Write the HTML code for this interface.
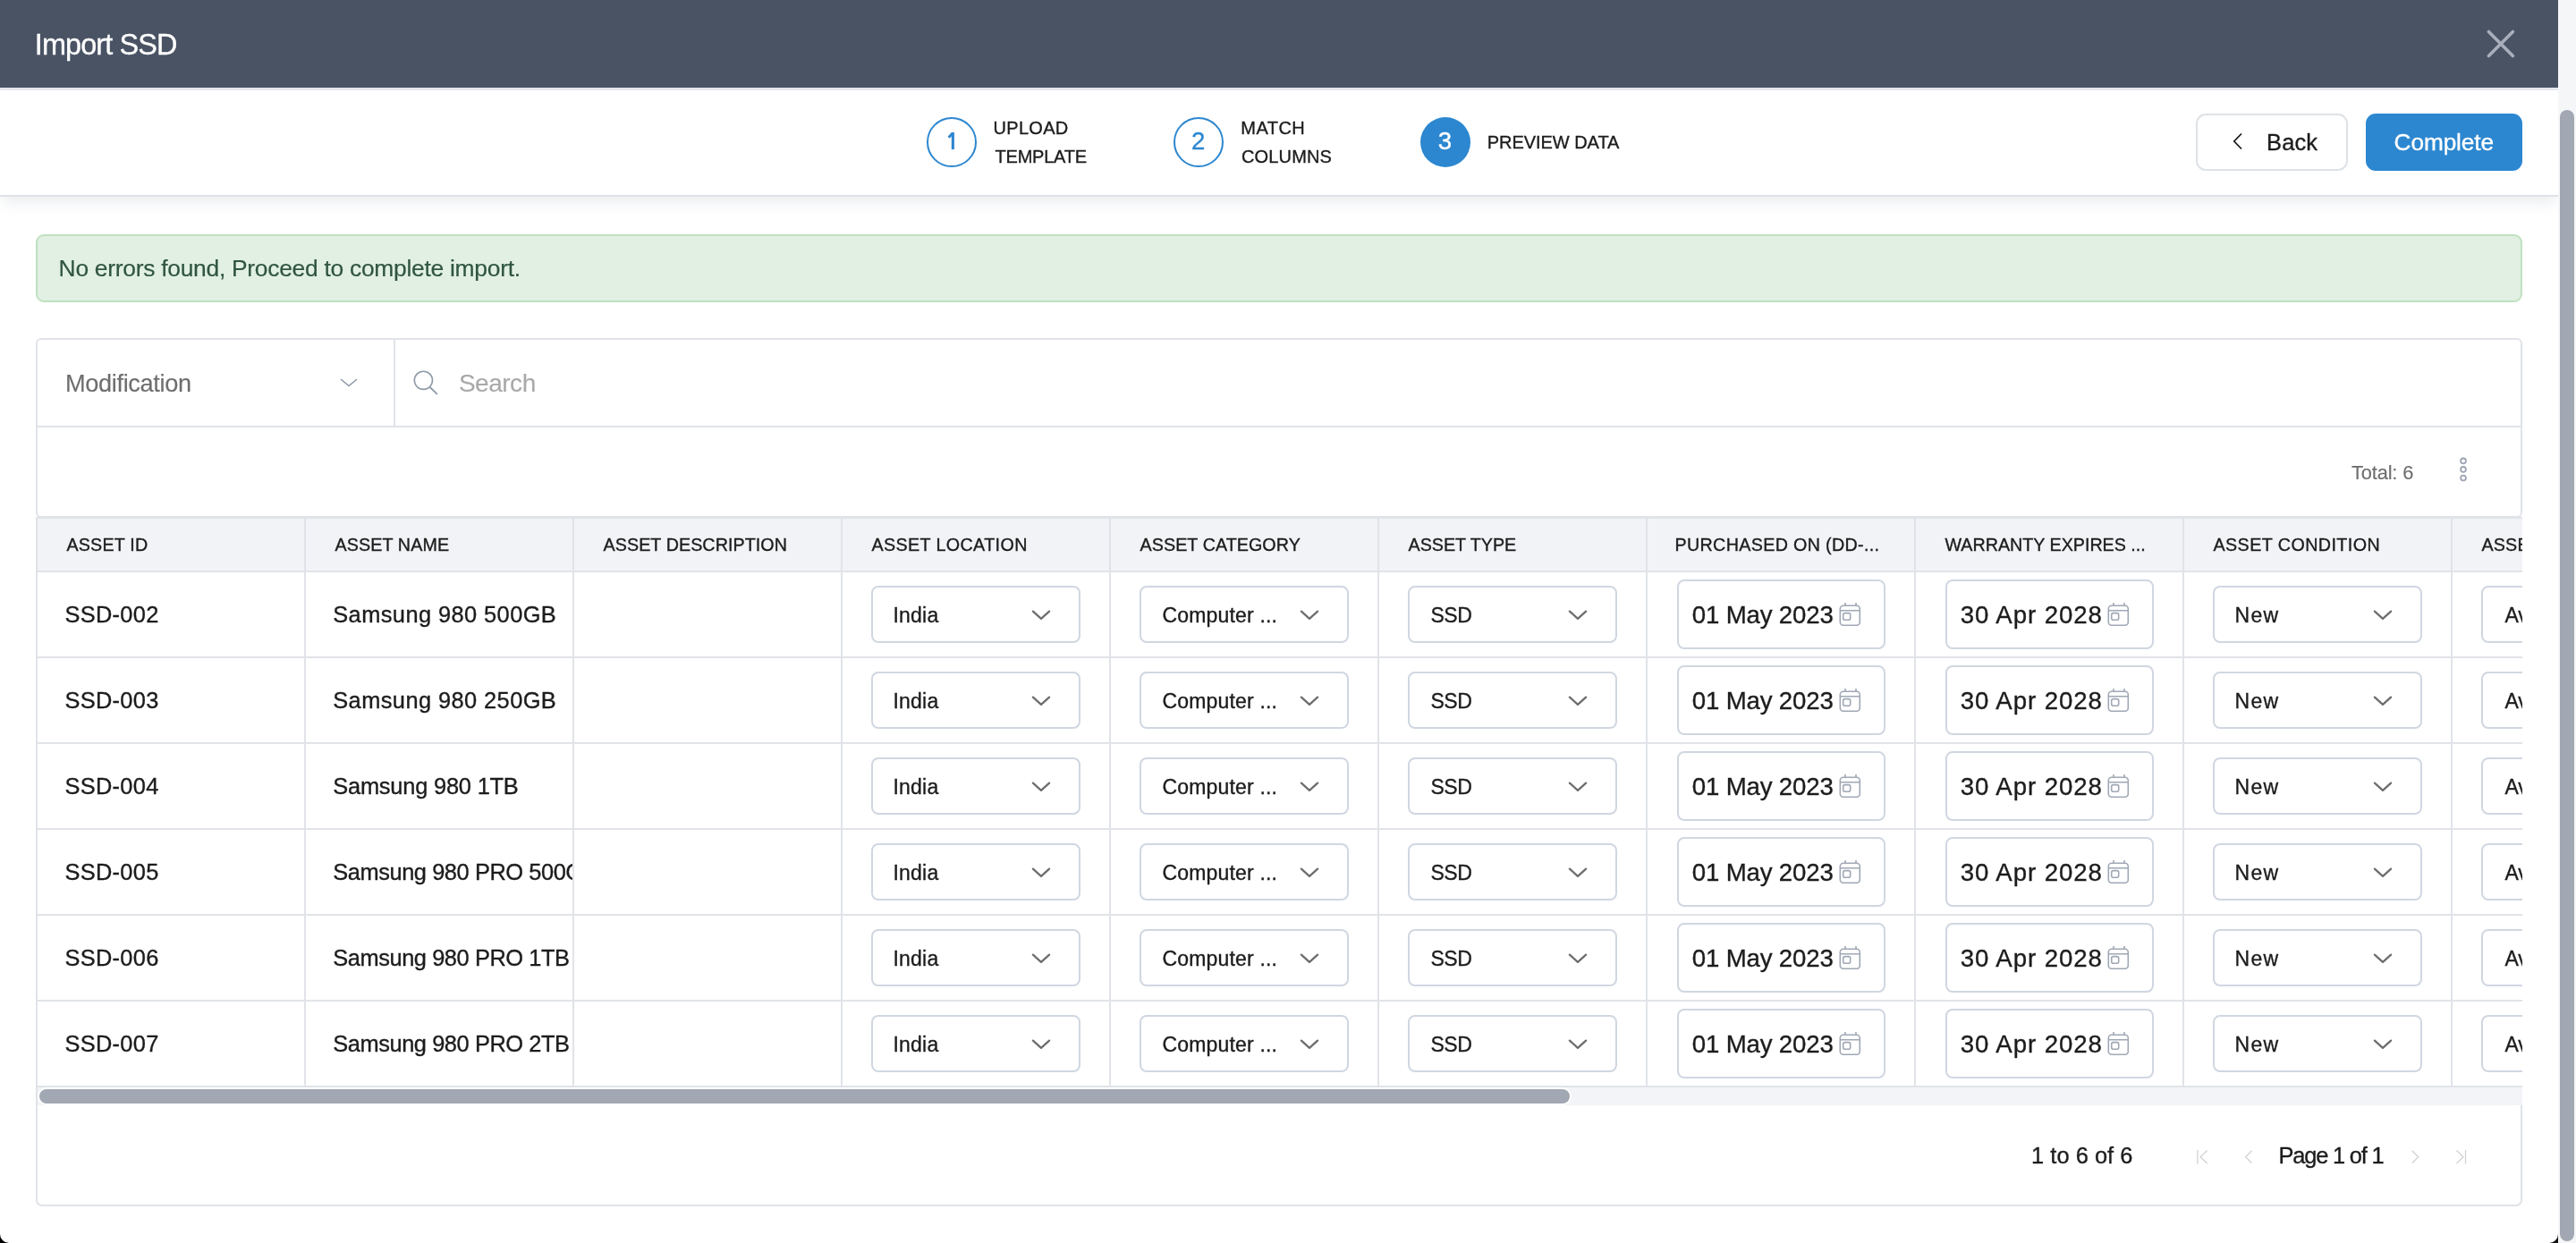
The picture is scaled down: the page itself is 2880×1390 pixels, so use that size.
<!DOCTYPE html>
<html><head><meta charset="utf-8"><title>Import SSD</title>
<style>
html,body{margin:0;padding:0;}
body{width:2880px;height:1390px;overflow:hidden;position:relative;background:#ffffff;font-family:"Liberation Sans",sans-serif;}
.t{position:absolute;line-height:1;white-space:nowrap;-webkit-text-stroke:0.35px currentColor;}
@media (max-width:2000px){body{width:1440px;height:695px;}#wrap{transform:scale(0.5);transform-origin:0 0;}}
</style></head><body>
<div id="wrap" style="position:absolute;left:0;top:0;width:2880px;height:1390px;will-change:transform;background:#fff;">
<div style="position:absolute;left:0px;top:0px;width:2860px;height:98px;background:#495364;"></div>
<div style="position:absolute;left:0px;top:98px;width:2860px;height:2.5px;background:#e6e8ec;"></div>
<div class="t" style="left:38.80px;top:34.00px;font-size:32.4px;color:#ffffff;letter-spacing:-0.867px;">Import SSD</div>
<svg style="position:absolute;left:2776px;top:29px" width="40" height="40" viewBox="0 0 40 40"><path d="M6.4 6.4 L33.4 33.4 M33.4 6.4 L6.4 33.4" stroke="#a9b0bb" stroke-width="3.6" stroke-linecap="round" fill="none"/></svg>
<div style="position:absolute;left:0px;top:100.5px;width:2860px;height:118px;background:#fff;box-shadow:0 9px 15px -2px rgba(50,70,100,0.10);"></div>
<div style="position:absolute;left:0px;top:218px;width:2860px;height:2px;background:#dee2e6;"></div>
<div style="position:absolute;left:1036px;top:130.8px;width:56px;height:56px;box-sizing:border-box;border:2px solid #2c87d0;border-radius:50%;"></div>
<svg style="position:absolute;left:1056px;top:145px" width="14" height="25" viewBox="0 0 14 25"><path d="M7.8 3.1 L10.9 3.1 L10.9 21.9 L7.8 21.9 L7.8 7.4 L5.4 9.7 L3.6 7.7 Z" fill="#2c87d0"/></svg>
<div style="position:absolute;left:1312px;top:130.8px;width:56px;height:56px;box-sizing:border-box;border:2px solid #2c87d0;border-radius:50%;"></div>
<div class="t" style="left:1332.00px;top:144.00px;font-size:27.6px;color:#2c87d0;letter-spacing:0.400px;">2</div>
<div style="position:absolute;left:1588px;top:130.8px;width:56px;height:56px;background:#2c87d0;border-radius:50%;"></div>
<div class="t" style="left:1607.75px;top:144.00px;font-size:27.6px;color:#ffffff;letter-spacing:1.000px;">3</div>
<div class="t" style="left:1110.50px;top:133.00px;font-size:20px;color:#1c1c1c;letter-spacing:0.300px;">UPLOAD</div>
<div class="t" style="left:1112.50px;top:165.00px;font-size:20px;color:#1c1c1c;letter-spacing:-0.214px;">TEMPLATE</div>
<div class="t" style="left:1387.30px;top:133.00px;font-size:20px;color:#1c1c1c;letter-spacing:0.475px;">MATCH</div>
<div class="t" style="left:1387.90px;top:165.00px;font-size:20px;color:#1c1c1c;letter-spacing:0.167px;">COLUMNS</div>
<div class="t" style="left:1662.75px;top:149.00px;font-size:20px;color:#1c1c1c;letter-spacing:-0.045px;">PREVIEW DATA</div>
<div style="position:absolute;left:2455px;top:127px;width:170px;height:64px;box-sizing:border-box;border:2px solid #dfe2e6;border-radius:11px;background:#fff;"></div>
<svg style="position:absolute;left:2492px;top:144px" width="20" height="28" viewBox="0 0 20 28"><path d="M14 5.5 L5.8 14 L14 22.5" stroke="#1c1c1c" stroke-width="1.8" fill="none"/></svg>
<div class="t" style="left:2534.00px;top:147.00px;font-size:25.4px;color:#1c1c1c;letter-spacing:0.200px;">Back</div>
<div style="position:absolute;left:2645px;top:127px;width:175px;height:64px;background:#2c87d0;border-radius:11px;"></div>
<div class="t" style="left:2676.60px;top:146.00px;font-size:26.2px;color:#ffffff;letter-spacing:-0.086px;">Complete</div>
<div style="position:absolute;left:40px;top:262px;width:2780px;height:76px;box-sizing:border-box;border:2px solid #bfe1c0;border-radius:9px;background:#e1f0e2;"></div>
<div class="t" style="left:65.60px;top:287.00px;font-size:26.4px;color:#30553f;letter-spacing:-0.270px;-webkit-text-stroke:0.2px currentColor;">No errors found, Proceed to complete import.</div>
<div style="position:absolute;left:40px;top:378px;width:2780px;height:201px;box-sizing:border-box;border:2px solid #e0e3e8;border-radius:6px;background:#fff;"></div>
<div style="position:absolute;left:40px;top:476px;width:2780px;height:1.5px;background:#e0e3e8;"></div>
<div style="position:absolute;left:440px;top:378px;width:1.5px;height:99px;background:#e0e3e8;"></div>
<div class="t" style="left:73.00px;top:415.00px;font-size:27.2px;color:#6e6e6e;letter-spacing:-0.364px;-webkit-text-stroke:0.15px currentColor;">Modification</div>
<svg style="position:absolute;left:376px;top:418px" width="28" height="20" viewBox="0 0 28 20"><path d="M5 6 L14 13.5 L23 6" stroke="#909aa8" stroke-width="1.6" fill="none"/></svg>
<svg style="position:absolute;left:458px;top:410px" width="36" height="36" viewBox="0 0 36 36"><circle cx="15.4" cy="15.3" r="10.1" stroke="#909aa8" stroke-width="1.6" fill="none"/><path d="M22.7 23 L30.9 30.8" stroke="#909aa8" stroke-width="1.8" fill="none"/></svg>
<div class="t" style="left:512.90px;top:415.00px;font-size:28px;color:#a9a9a9;letter-spacing:-0.480px;-webkit-text-stroke:0.15px currentColor;">Search</div>
<div class="t" style="left:2629.00px;top:518.00px;font-size:21.8px;color:#6e6e6e;letter-spacing:-0.143px;-webkit-text-stroke:0.15px currentColor;">Total: 6</div>
<svg style="position:absolute;left:2744px;top:505px" width="20" height="40" viewBox="0 0 20 40"><g stroke="#9ba4b2" stroke-width="1.8" fill="none"><circle cx="10" cy="10.4" r="2.9"/><circle cx="10" cy="19.9" r="2.9"/><circle cx="10" cy="29.5" r="2.9"/></g></svg>
<div style="position:absolute;left:40px;top:578px;width:2780px;height:658px;overflow:hidden;">
<div style="position:absolute;left:0px;top:0px;width:3000px;height:62px;background:#f2f3f6;"></div>
<div style="position:absolute;left:0px;top:0px;width:3000px;height:2px;background:#e0e3e8;"></div>
<div style="position:absolute;left:0px;top:60px;width:3000px;height:2px;background:#e0e3e8;"></div>
<div style="position:absolute;left:0px;top:0px;width:2px;height:638px;background:#e0e3e8;"></div>
<div class="t" style="left:34.50px;top:22.00px;font-size:19.7px;color:#1c1c1c;letter-spacing:0.179px;">ASSET ID</div>
<div class="t" style="left:334.50px;top:22.00px;font-size:19.7px;color:#1c1c1c;letter-spacing:0.111px;">ASSET NAME</div>
<div class="t" style="left:634.50px;top:22.00px;font-size:19.7px;color:#1c1c1c;letter-spacing:0.078px;">ASSET DESCRIPTION</div>
<div class="t" style="left:934.50px;top:22.00px;font-size:19.7px;color:#1c1c1c;letter-spacing:0.385px;">ASSET LOCATION</div>
<div class="t" style="left:1234.50px;top:22.00px;font-size:19.7px;color:#1c1c1c;letter-spacing:0.077px;">ASSET CATEGORY</div>
<div class="t" style="left:1534.50px;top:22.00px;font-size:19.7px;color:#1c1c1c;letter-spacing:0.000px;">ASSET TYPE</div>
<div class="t" style="left:1832.50px;top:22.00px;font-size:19.7px;color:#1c1c1c;letter-spacing:0.342px;">PURCHASED ON (DD-...</div>
<div class="t" style="left:2134.50px;top:22.00px;font-size:19.7px;color:#1c1c1c;letter-spacing:0.000px;">WARRANTY EXPIRES ...</div>
<div class="t" style="left:2434.50px;top:22.00px;font-size:19.7px;color:#1c1c1c;letter-spacing:0.429px;">ASSET CONDITION</div>
<div class="t" style="left:2734.50px;top:22.00px;font-size:19.7px;color:#1c1c1c;letter-spacing:0.179px;">ASSET STATUS</div>
<div style="position:absolute;left:300px;top:0px;width:2px;height:638px;background:#e0e3e8;"></div>
<div style="position:absolute;left:600px;top:0px;width:2px;height:638px;background:#e0e3e8;"></div>
<div style="position:absolute;left:900px;top:0px;width:2px;height:638px;background:#e0e3e8;"></div>
<div style="position:absolute;left:1200px;top:0px;width:2px;height:638px;background:#e0e3e8;"></div>
<div style="position:absolute;left:1500px;top:0px;width:2px;height:638px;background:#e0e3e8;"></div>
<div style="position:absolute;left:1800px;top:0px;width:2px;height:638px;background:#e0e3e8;"></div>
<div style="position:absolute;left:2100px;top:0px;width:2px;height:638px;background:#e0e3e8;"></div>
<div style="position:absolute;left:2400px;top:0px;width:2px;height:638px;background:#e0e3e8;"></div>
<div style="position:absolute;left:2700px;top:0px;width:2px;height:638px;background:#e0e3e8;"></div>
<div style="position:absolute;left:0px;top:156px;width:3000px;height:2px;background:#e0e3e8;"></div>
<div class="t" style="left:32.50px;top:97.00px;font-size:25.4px;color:#1c1c1c;letter-spacing:0.292px;">SSD-002</div>
<div style="position:absolute;left:300px;top:62px;width:300px;height:94px;overflow:hidden;">
<div class="t" style="left:32.25px;top:35.00px;font-size:25.4px;color:#1c1c1c;letter-spacing:0.422px;">Samsung 980 500GB</div></div>
<div style="position:absolute;left:934px;top:77px;width:234px;height:63.5px;box-sizing:border-box;border:2px solid #d0d7e1;border-radius:8px;background:#fff;"></div>
<div class="t" style="left:958.40px;top:99.00px;font-size:23px;color:#1c1c1c;letter-spacing:0.250px;">India</div>
<svg style="position:absolute;left:1110px;top:101px" width="30" height="20" viewBox="0 0 30 20"><path d="M4.9 4.6 L14 12.8 L23.1 4.6" stroke="#6d6d6d" stroke-width="2.3" stroke-linecap="round" stroke-linejoin="round" fill="none"/></svg>
<div style="position:absolute;left:1234px;top:77px;width:234px;height:63.5px;box-sizing:border-box;border:2px solid #d0d7e1;border-radius:8px;background:#fff;"></div>
<div class="t" style="left:1259.40px;top:99.00px;font-size:23px;color:#1c1c1c;letter-spacing:0.182px;">Computer ...</div>
<svg style="position:absolute;left:1410px;top:101px" width="30" height="20" viewBox="0 0 30 20"><path d="M4.9 4.6 L14 12.8 L23.1 4.6" stroke="#6d6d6d" stroke-width="2.3" stroke-linecap="round" stroke-linejoin="round" fill="none"/></svg>
<div style="position:absolute;left:1534px;top:77px;width:234px;height:63.5px;box-sizing:border-box;border:2px solid #d0d7e1;border-radius:8px;background:#fff;"></div>
<div class="t" style="left:1559.40px;top:99.00px;font-size:23px;color:#1c1c1c;letter-spacing:-0.375px;">SSD</div>
<svg style="position:absolute;left:1710px;top:101px" width="30" height="20" viewBox="0 0 30 20"><path d="M4.9 4.6 L14 12.8 L23.1 4.6" stroke="#6d6d6d" stroke-width="2.3" stroke-linecap="round" stroke-linejoin="round" fill="none"/></svg>
<div style="position:absolute;left:2434px;top:77px;width:234px;height:63.5px;box-sizing:border-box;border:2px solid #d0d7e1;border-radius:8px;background:#fff;"></div>
<div class="t" style="left:2458.40px;top:99.00px;font-size:23px;color:#1c1c1c;letter-spacing:1.375px;">New</div>
<svg style="position:absolute;left:2610px;top:101px" width="30" height="20" viewBox="0 0 30 20"><path d="M4.9 4.6 L14 12.8 L23.1 4.6" stroke="#6d6d6d" stroke-width="2.3" stroke-linecap="round" stroke-linejoin="round" fill="none"/></svg>
<div style="position:absolute;left:2734px;top:77px;width:234px;height:63.5px;box-sizing:border-box;border:2px solid #d0d7e1;border-radius:8px;background:#fff;"></div>
<div class="t" style="left:2760.40px;top:99.00px;font-size:23px;color:#1c1c1c;letter-spacing:0.000px;">Available</div>
<svg style="position:absolute;left:2910px;top:101px" width="30" height="20" viewBox="0 0 30 20"><path d="M4.9 4.6 L14 12.8 L23.1 4.6" stroke="#6d6d6d" stroke-width="2.3" stroke-linecap="round" stroke-linejoin="round" fill="none"/></svg>
<div style="position:absolute;left:1834.5px;top:70px;width:233px;height:78px;box-sizing:border-box;border:2px solid #d0d7e1;border-radius:8px;background:#fff;"></div>
<div class="t" style="left:1851.75px;top:96.00px;font-size:27.6px;color:#1c1c1c;letter-spacing:-0.150px;">01 May 2023</div>
<svg style="position:absolute;left:2013.5px;top:93px" width="30" height="32" viewBox="0 0 30 32"><g stroke="#a0a8b5" stroke-width="1.6" fill="none"><rect x="3.3" y="6.2" width="22" height="22" rx="3.5"/><path d="M3.3 11.8 H25.3 M9 3 V6.2 M21 3 V6.2"/><rect x="6.7" y="14.6" width="8" height="7.6" rx="2"/></g></svg>
<div style="position:absolute;left:2134.5px;top:70px;width:233px;height:78px;box-sizing:border-box;border:2px solid #d0d7e1;border-radius:8px;background:#fff;"></div>
<div class="t" style="left:2151.75px;top:96.00px;font-size:27.6px;color:#1c1c1c;letter-spacing:0.925px;">30 Apr 2028</div>
<svg style="position:absolute;left:2313.5px;top:93px" width="30" height="32" viewBox="0 0 30 32"><g stroke="#a0a8b5" stroke-width="1.6" fill="none"><rect x="3.3" y="6.2" width="22" height="22" rx="3.5"/><path d="M3.3 11.8 H25.3 M9 3 V6.2 M21 3 V6.2"/><rect x="6.7" y="14.6" width="8" height="7.6" rx="2"/></g></svg>
<div style="position:absolute;left:0px;top:252px;width:3000px;height:2px;background:#e0e3e8;"></div>
<div class="t" style="left:32.50px;top:193.00px;font-size:25.4px;color:#1c1c1c;letter-spacing:0.292px;">SSD-003</div>
<div style="position:absolute;left:300px;top:158px;width:300px;height:94px;overflow:hidden;">
<div class="t" style="left:32.25px;top:35.00px;font-size:25.4px;color:#1c1c1c;letter-spacing:0.422px;">Samsung 980 250GB</div></div>
<div style="position:absolute;left:934px;top:173px;width:234px;height:63.5px;box-sizing:border-box;border:2px solid #d0d7e1;border-radius:8px;background:#fff;"></div>
<div class="t" style="left:958.40px;top:195.00px;font-size:23px;color:#1c1c1c;letter-spacing:0.250px;">India</div>
<svg style="position:absolute;left:1110px;top:197px" width="30" height="20" viewBox="0 0 30 20"><path d="M4.9 4.6 L14 12.8 L23.1 4.6" stroke="#6d6d6d" stroke-width="2.3" stroke-linecap="round" stroke-linejoin="round" fill="none"/></svg>
<div style="position:absolute;left:1234px;top:173px;width:234px;height:63.5px;box-sizing:border-box;border:2px solid #d0d7e1;border-radius:8px;background:#fff;"></div>
<div class="t" style="left:1259.40px;top:195.00px;font-size:23px;color:#1c1c1c;letter-spacing:0.182px;">Computer ...</div>
<svg style="position:absolute;left:1410px;top:197px" width="30" height="20" viewBox="0 0 30 20"><path d="M4.9 4.6 L14 12.8 L23.1 4.6" stroke="#6d6d6d" stroke-width="2.3" stroke-linecap="round" stroke-linejoin="round" fill="none"/></svg>
<div style="position:absolute;left:1534px;top:173px;width:234px;height:63.5px;box-sizing:border-box;border:2px solid #d0d7e1;border-radius:8px;background:#fff;"></div>
<div class="t" style="left:1559.40px;top:195.00px;font-size:23px;color:#1c1c1c;letter-spacing:-0.375px;">SSD</div>
<svg style="position:absolute;left:1710px;top:197px" width="30" height="20" viewBox="0 0 30 20"><path d="M4.9 4.6 L14 12.8 L23.1 4.6" stroke="#6d6d6d" stroke-width="2.3" stroke-linecap="round" stroke-linejoin="round" fill="none"/></svg>
<div style="position:absolute;left:2434px;top:173px;width:234px;height:63.5px;box-sizing:border-box;border:2px solid #d0d7e1;border-radius:8px;background:#fff;"></div>
<div class="t" style="left:2458.40px;top:195.00px;font-size:23px;color:#1c1c1c;letter-spacing:1.375px;">New</div>
<svg style="position:absolute;left:2610px;top:197px" width="30" height="20" viewBox="0 0 30 20"><path d="M4.9 4.6 L14 12.8 L23.1 4.6" stroke="#6d6d6d" stroke-width="2.3" stroke-linecap="round" stroke-linejoin="round" fill="none"/></svg>
<div style="position:absolute;left:2734px;top:173px;width:234px;height:63.5px;box-sizing:border-box;border:2px solid #d0d7e1;border-radius:8px;background:#fff;"></div>
<div class="t" style="left:2760.40px;top:195.00px;font-size:23px;color:#1c1c1c;letter-spacing:0.000px;">Available</div>
<svg style="position:absolute;left:2910px;top:197px" width="30" height="20" viewBox="0 0 30 20"><path d="M4.9 4.6 L14 12.8 L23.1 4.6" stroke="#6d6d6d" stroke-width="2.3" stroke-linecap="round" stroke-linejoin="round" fill="none"/></svg>
<div style="position:absolute;left:1834.5px;top:166px;width:233px;height:78px;box-sizing:border-box;border:2px solid #d0d7e1;border-radius:8px;background:#fff;"></div>
<div class="t" style="left:1851.75px;top:192.00px;font-size:27.6px;color:#1c1c1c;letter-spacing:-0.150px;">01 May 2023</div>
<svg style="position:absolute;left:2013.5px;top:189px" width="30" height="32" viewBox="0 0 30 32"><g stroke="#a0a8b5" stroke-width="1.6" fill="none"><rect x="3.3" y="6.2" width="22" height="22" rx="3.5"/><path d="M3.3 11.8 H25.3 M9 3 V6.2 M21 3 V6.2"/><rect x="6.7" y="14.6" width="8" height="7.6" rx="2"/></g></svg>
<div style="position:absolute;left:2134.5px;top:166px;width:233px;height:78px;box-sizing:border-box;border:2px solid #d0d7e1;border-radius:8px;background:#fff;"></div>
<div class="t" style="left:2151.75px;top:192.00px;font-size:27.6px;color:#1c1c1c;letter-spacing:0.925px;">30 Apr 2028</div>
<svg style="position:absolute;left:2313.5px;top:189px" width="30" height="32" viewBox="0 0 30 32"><g stroke="#a0a8b5" stroke-width="1.6" fill="none"><rect x="3.3" y="6.2" width="22" height="22" rx="3.5"/><path d="M3.3 11.8 H25.3 M9 3 V6.2 M21 3 V6.2"/><rect x="6.7" y="14.6" width="8" height="7.6" rx="2"/></g></svg>
<div style="position:absolute;left:0px;top:348px;width:3000px;height:2px;background:#e0e3e8;"></div>
<div class="t" style="left:32.50px;top:289.00px;font-size:25.4px;color:#1c1c1c;letter-spacing:0.292px;">SSD-004</div>
<div style="position:absolute;left:300px;top:254px;width:300px;height:94px;overflow:hidden;">
<div class="t" style="left:32.25px;top:35.00px;font-size:25.4px;color:#1c1c1c;letter-spacing:-0.196px;">Samsung 980 1TB</div></div>
<div style="position:absolute;left:934px;top:269px;width:234px;height:63.5px;box-sizing:border-box;border:2px solid #d0d7e1;border-radius:8px;background:#fff;"></div>
<div class="t" style="left:958.40px;top:291.00px;font-size:23px;color:#1c1c1c;letter-spacing:0.250px;">India</div>
<svg style="position:absolute;left:1110px;top:293px" width="30" height="20" viewBox="0 0 30 20"><path d="M4.9 4.6 L14 12.8 L23.1 4.6" stroke="#6d6d6d" stroke-width="2.3" stroke-linecap="round" stroke-linejoin="round" fill="none"/></svg>
<div style="position:absolute;left:1234px;top:269px;width:234px;height:63.5px;box-sizing:border-box;border:2px solid #d0d7e1;border-radius:8px;background:#fff;"></div>
<div class="t" style="left:1259.40px;top:291.00px;font-size:23px;color:#1c1c1c;letter-spacing:0.182px;">Computer ...</div>
<svg style="position:absolute;left:1410px;top:293px" width="30" height="20" viewBox="0 0 30 20"><path d="M4.9 4.6 L14 12.8 L23.1 4.6" stroke="#6d6d6d" stroke-width="2.3" stroke-linecap="round" stroke-linejoin="round" fill="none"/></svg>
<div style="position:absolute;left:1534px;top:269px;width:234px;height:63.5px;box-sizing:border-box;border:2px solid #d0d7e1;border-radius:8px;background:#fff;"></div>
<div class="t" style="left:1559.40px;top:291.00px;font-size:23px;color:#1c1c1c;letter-spacing:-0.375px;">SSD</div>
<svg style="position:absolute;left:1710px;top:293px" width="30" height="20" viewBox="0 0 30 20"><path d="M4.9 4.6 L14 12.8 L23.1 4.6" stroke="#6d6d6d" stroke-width="2.3" stroke-linecap="round" stroke-linejoin="round" fill="none"/></svg>
<div style="position:absolute;left:2434px;top:269px;width:234px;height:63.5px;box-sizing:border-box;border:2px solid #d0d7e1;border-radius:8px;background:#fff;"></div>
<div class="t" style="left:2458.40px;top:291.00px;font-size:23px;color:#1c1c1c;letter-spacing:1.375px;">New</div>
<svg style="position:absolute;left:2610px;top:293px" width="30" height="20" viewBox="0 0 30 20"><path d="M4.9 4.6 L14 12.8 L23.1 4.6" stroke="#6d6d6d" stroke-width="2.3" stroke-linecap="round" stroke-linejoin="round" fill="none"/></svg>
<div style="position:absolute;left:2734px;top:269px;width:234px;height:63.5px;box-sizing:border-box;border:2px solid #d0d7e1;border-radius:8px;background:#fff;"></div>
<div class="t" style="left:2760.40px;top:291.00px;font-size:23px;color:#1c1c1c;letter-spacing:0.000px;">Available</div>
<svg style="position:absolute;left:2910px;top:293px" width="30" height="20" viewBox="0 0 30 20"><path d="M4.9 4.6 L14 12.8 L23.1 4.6" stroke="#6d6d6d" stroke-width="2.3" stroke-linecap="round" stroke-linejoin="round" fill="none"/></svg>
<div style="position:absolute;left:1834.5px;top:262px;width:233px;height:78px;box-sizing:border-box;border:2px solid #d0d7e1;border-radius:8px;background:#fff;"></div>
<div class="t" style="left:1851.75px;top:288.00px;font-size:27.6px;color:#1c1c1c;letter-spacing:-0.150px;">01 May 2023</div>
<svg style="position:absolute;left:2013.5px;top:285px" width="30" height="32" viewBox="0 0 30 32"><g stroke="#a0a8b5" stroke-width="1.6" fill="none"><rect x="3.3" y="6.2" width="22" height="22" rx="3.5"/><path d="M3.3 11.8 H25.3 M9 3 V6.2 M21 3 V6.2"/><rect x="6.7" y="14.6" width="8" height="7.6" rx="2"/></g></svg>
<div style="position:absolute;left:2134.5px;top:262px;width:233px;height:78px;box-sizing:border-box;border:2px solid #d0d7e1;border-radius:8px;background:#fff;"></div>
<div class="t" style="left:2151.75px;top:288.00px;font-size:27.6px;color:#1c1c1c;letter-spacing:0.925px;">30 Apr 2028</div>
<svg style="position:absolute;left:2313.5px;top:285px" width="30" height="32" viewBox="0 0 30 32"><g stroke="#a0a8b5" stroke-width="1.6" fill="none"><rect x="3.3" y="6.2" width="22" height="22" rx="3.5"/><path d="M3.3 11.8 H25.3 M9 3 V6.2 M21 3 V6.2"/><rect x="6.7" y="14.6" width="8" height="7.6" rx="2"/></g></svg>
<div style="position:absolute;left:0px;top:444px;width:3000px;height:2px;background:#e0e3e8;"></div>
<div class="t" style="left:32.50px;top:385.00px;font-size:25.4px;color:#1c1c1c;letter-spacing:0.292px;">SSD-005</div>
<div style="position:absolute;left:300px;top:350px;width:300px;height:94px;overflow:hidden;">
<div class="t" style="left:32.25px;top:35.00px;font-size:25.4px;color:#1c1c1c;letter-spacing:-0.425px;">Samsung 980 PRO 500GB</div></div>
<div style="position:absolute;left:934px;top:365px;width:234px;height:63.5px;box-sizing:border-box;border:2px solid #d0d7e1;border-radius:8px;background:#fff;"></div>
<div class="t" style="left:958.40px;top:387.00px;font-size:23px;color:#1c1c1c;letter-spacing:0.250px;">India</div>
<svg style="position:absolute;left:1110px;top:389px" width="30" height="20" viewBox="0 0 30 20"><path d="M4.9 4.6 L14 12.8 L23.1 4.6" stroke="#6d6d6d" stroke-width="2.3" stroke-linecap="round" stroke-linejoin="round" fill="none"/></svg>
<div style="position:absolute;left:1234px;top:365px;width:234px;height:63.5px;box-sizing:border-box;border:2px solid #d0d7e1;border-radius:8px;background:#fff;"></div>
<div class="t" style="left:1259.40px;top:387.00px;font-size:23px;color:#1c1c1c;letter-spacing:0.182px;">Computer ...</div>
<svg style="position:absolute;left:1410px;top:389px" width="30" height="20" viewBox="0 0 30 20"><path d="M4.9 4.6 L14 12.8 L23.1 4.6" stroke="#6d6d6d" stroke-width="2.3" stroke-linecap="round" stroke-linejoin="round" fill="none"/></svg>
<div style="position:absolute;left:1534px;top:365px;width:234px;height:63.5px;box-sizing:border-box;border:2px solid #d0d7e1;border-radius:8px;background:#fff;"></div>
<div class="t" style="left:1559.40px;top:387.00px;font-size:23px;color:#1c1c1c;letter-spacing:-0.375px;">SSD</div>
<svg style="position:absolute;left:1710px;top:389px" width="30" height="20" viewBox="0 0 30 20"><path d="M4.9 4.6 L14 12.8 L23.1 4.6" stroke="#6d6d6d" stroke-width="2.3" stroke-linecap="round" stroke-linejoin="round" fill="none"/></svg>
<div style="position:absolute;left:2434px;top:365px;width:234px;height:63.5px;box-sizing:border-box;border:2px solid #d0d7e1;border-radius:8px;background:#fff;"></div>
<div class="t" style="left:2458.40px;top:387.00px;font-size:23px;color:#1c1c1c;letter-spacing:1.375px;">New</div>
<svg style="position:absolute;left:2610px;top:389px" width="30" height="20" viewBox="0 0 30 20"><path d="M4.9 4.6 L14 12.8 L23.1 4.6" stroke="#6d6d6d" stroke-width="2.3" stroke-linecap="round" stroke-linejoin="round" fill="none"/></svg>
<div style="position:absolute;left:2734px;top:365px;width:234px;height:63.5px;box-sizing:border-box;border:2px solid #d0d7e1;border-radius:8px;background:#fff;"></div>
<div class="t" style="left:2760.40px;top:387.00px;font-size:23px;color:#1c1c1c;letter-spacing:0.000px;">Available</div>
<svg style="position:absolute;left:2910px;top:389px" width="30" height="20" viewBox="0 0 30 20"><path d="M4.9 4.6 L14 12.8 L23.1 4.6" stroke="#6d6d6d" stroke-width="2.3" stroke-linecap="round" stroke-linejoin="round" fill="none"/></svg>
<div style="position:absolute;left:1834.5px;top:358px;width:233px;height:78px;box-sizing:border-box;border:2px solid #d0d7e1;border-radius:8px;background:#fff;"></div>
<div class="t" style="left:1851.75px;top:384.00px;font-size:27.6px;color:#1c1c1c;letter-spacing:-0.150px;">01 May 2023</div>
<svg style="position:absolute;left:2013.5px;top:381px" width="30" height="32" viewBox="0 0 30 32"><g stroke="#a0a8b5" stroke-width="1.6" fill="none"><rect x="3.3" y="6.2" width="22" height="22" rx="3.5"/><path d="M3.3 11.8 H25.3 M9 3 V6.2 M21 3 V6.2"/><rect x="6.7" y="14.6" width="8" height="7.6" rx="2"/></g></svg>
<div style="position:absolute;left:2134.5px;top:358px;width:233px;height:78px;box-sizing:border-box;border:2px solid #d0d7e1;border-radius:8px;background:#fff;"></div>
<div class="t" style="left:2151.75px;top:384.00px;font-size:27.6px;color:#1c1c1c;letter-spacing:0.925px;">30 Apr 2028</div>
<svg style="position:absolute;left:2313.5px;top:381px" width="30" height="32" viewBox="0 0 30 32"><g stroke="#a0a8b5" stroke-width="1.6" fill="none"><rect x="3.3" y="6.2" width="22" height="22" rx="3.5"/><path d="M3.3 11.8 H25.3 M9 3 V6.2 M21 3 V6.2"/><rect x="6.7" y="14.6" width="8" height="7.6" rx="2"/></g></svg>
<div style="position:absolute;left:0px;top:540px;width:3000px;height:2px;background:#e0e3e8;"></div>
<div class="t" style="left:32.50px;top:481.00px;font-size:25.4px;color:#1c1c1c;letter-spacing:0.292px;">SSD-006</div>
<div style="position:absolute;left:300px;top:446px;width:300px;height:94px;overflow:hidden;">
<div class="t" style="left:32.25px;top:35.00px;font-size:25.4px;color:#1c1c1c;letter-spacing:-0.425px;">Samsung 980 PRO 1TB</div></div>
<div style="position:absolute;left:934px;top:461px;width:234px;height:63.5px;box-sizing:border-box;border:2px solid #d0d7e1;border-radius:8px;background:#fff;"></div>
<div class="t" style="left:958.40px;top:483.00px;font-size:23px;color:#1c1c1c;letter-spacing:0.250px;">India</div>
<svg style="position:absolute;left:1110px;top:485px" width="30" height="20" viewBox="0 0 30 20"><path d="M4.9 4.6 L14 12.8 L23.1 4.6" stroke="#6d6d6d" stroke-width="2.3" stroke-linecap="round" stroke-linejoin="round" fill="none"/></svg>
<div style="position:absolute;left:1234px;top:461px;width:234px;height:63.5px;box-sizing:border-box;border:2px solid #d0d7e1;border-radius:8px;background:#fff;"></div>
<div class="t" style="left:1259.40px;top:483.00px;font-size:23px;color:#1c1c1c;letter-spacing:0.182px;">Computer ...</div>
<svg style="position:absolute;left:1410px;top:485px" width="30" height="20" viewBox="0 0 30 20"><path d="M4.9 4.6 L14 12.8 L23.1 4.6" stroke="#6d6d6d" stroke-width="2.3" stroke-linecap="round" stroke-linejoin="round" fill="none"/></svg>
<div style="position:absolute;left:1534px;top:461px;width:234px;height:63.5px;box-sizing:border-box;border:2px solid #d0d7e1;border-radius:8px;background:#fff;"></div>
<div class="t" style="left:1559.40px;top:483.00px;font-size:23px;color:#1c1c1c;letter-spacing:-0.375px;">SSD</div>
<svg style="position:absolute;left:1710px;top:485px" width="30" height="20" viewBox="0 0 30 20"><path d="M4.9 4.6 L14 12.8 L23.1 4.6" stroke="#6d6d6d" stroke-width="2.3" stroke-linecap="round" stroke-linejoin="round" fill="none"/></svg>
<div style="position:absolute;left:2434px;top:461px;width:234px;height:63.5px;box-sizing:border-box;border:2px solid #d0d7e1;border-radius:8px;background:#fff;"></div>
<div class="t" style="left:2458.40px;top:483.00px;font-size:23px;color:#1c1c1c;letter-spacing:1.375px;">New</div>
<svg style="position:absolute;left:2610px;top:485px" width="30" height="20" viewBox="0 0 30 20"><path d="M4.9 4.6 L14 12.8 L23.1 4.6" stroke="#6d6d6d" stroke-width="2.3" stroke-linecap="round" stroke-linejoin="round" fill="none"/></svg>
<div style="position:absolute;left:2734px;top:461px;width:234px;height:63.5px;box-sizing:border-box;border:2px solid #d0d7e1;border-radius:8px;background:#fff;"></div>
<div class="t" style="left:2760.40px;top:483.00px;font-size:23px;color:#1c1c1c;letter-spacing:0.000px;">Available</div>
<svg style="position:absolute;left:2910px;top:485px" width="30" height="20" viewBox="0 0 30 20"><path d="M4.9 4.6 L14 12.8 L23.1 4.6" stroke="#6d6d6d" stroke-width="2.3" stroke-linecap="round" stroke-linejoin="round" fill="none"/></svg>
<div style="position:absolute;left:1834.5px;top:454px;width:233px;height:78px;box-sizing:border-box;border:2px solid #d0d7e1;border-radius:8px;background:#fff;"></div>
<div class="t" style="left:1851.75px;top:480.00px;font-size:27.6px;color:#1c1c1c;letter-spacing:-0.150px;">01 May 2023</div>
<svg style="position:absolute;left:2013.5px;top:477px" width="30" height="32" viewBox="0 0 30 32"><g stroke="#a0a8b5" stroke-width="1.6" fill="none"><rect x="3.3" y="6.2" width="22" height="22" rx="3.5"/><path d="M3.3 11.8 H25.3 M9 3 V6.2 M21 3 V6.2"/><rect x="6.7" y="14.6" width="8" height="7.6" rx="2"/></g></svg>
<div style="position:absolute;left:2134.5px;top:454px;width:233px;height:78px;box-sizing:border-box;border:2px solid #d0d7e1;border-radius:8px;background:#fff;"></div>
<div class="t" style="left:2151.75px;top:480.00px;font-size:27.6px;color:#1c1c1c;letter-spacing:0.925px;">30 Apr 2028</div>
<svg style="position:absolute;left:2313.5px;top:477px" width="30" height="32" viewBox="0 0 30 32"><g stroke="#a0a8b5" stroke-width="1.6" fill="none"><rect x="3.3" y="6.2" width="22" height="22" rx="3.5"/><path d="M3.3 11.8 H25.3 M9 3 V6.2 M21 3 V6.2"/><rect x="6.7" y="14.6" width="8" height="7.6" rx="2"/></g></svg>
<div style="position:absolute;left:0px;top:636px;width:3000px;height:2px;background:#e0e3e8;"></div>
<div class="t" style="left:32.50px;top:577.00px;font-size:25.4px;color:#1c1c1c;letter-spacing:0.292px;">SSD-007</div>
<div style="position:absolute;left:300px;top:542px;width:300px;height:94px;overflow:hidden;">
<div class="t" style="left:32.25px;top:35.00px;font-size:25.4px;color:#1c1c1c;letter-spacing:-0.425px;">Samsung 980 PRO 2TB</div></div>
<div style="position:absolute;left:934px;top:557px;width:234px;height:63.5px;box-sizing:border-box;border:2px solid #d0d7e1;border-radius:8px;background:#fff;"></div>
<div class="t" style="left:958.40px;top:579.00px;font-size:23px;color:#1c1c1c;letter-spacing:0.250px;">India</div>
<svg style="position:absolute;left:1110px;top:581px" width="30" height="20" viewBox="0 0 30 20"><path d="M4.9 4.6 L14 12.8 L23.1 4.6" stroke="#6d6d6d" stroke-width="2.3" stroke-linecap="round" stroke-linejoin="round" fill="none"/></svg>
<div style="position:absolute;left:1234px;top:557px;width:234px;height:63.5px;box-sizing:border-box;border:2px solid #d0d7e1;border-radius:8px;background:#fff;"></div>
<div class="t" style="left:1259.40px;top:579.00px;font-size:23px;color:#1c1c1c;letter-spacing:0.182px;">Computer ...</div>
<svg style="position:absolute;left:1410px;top:581px" width="30" height="20" viewBox="0 0 30 20"><path d="M4.9 4.6 L14 12.8 L23.1 4.6" stroke="#6d6d6d" stroke-width="2.3" stroke-linecap="round" stroke-linejoin="round" fill="none"/></svg>
<div style="position:absolute;left:1534px;top:557px;width:234px;height:63.5px;box-sizing:border-box;border:2px solid #d0d7e1;border-radius:8px;background:#fff;"></div>
<div class="t" style="left:1559.40px;top:579.00px;font-size:23px;color:#1c1c1c;letter-spacing:-0.375px;">SSD</div>
<svg style="position:absolute;left:1710px;top:581px" width="30" height="20" viewBox="0 0 30 20"><path d="M4.9 4.6 L14 12.8 L23.1 4.6" stroke="#6d6d6d" stroke-width="2.3" stroke-linecap="round" stroke-linejoin="round" fill="none"/></svg>
<div style="position:absolute;left:2434px;top:557px;width:234px;height:63.5px;box-sizing:border-box;border:2px solid #d0d7e1;border-radius:8px;background:#fff;"></div>
<div class="t" style="left:2458.40px;top:579.00px;font-size:23px;color:#1c1c1c;letter-spacing:1.375px;">New</div>
<svg style="position:absolute;left:2610px;top:581px" width="30" height="20" viewBox="0 0 30 20"><path d="M4.9 4.6 L14 12.8 L23.1 4.6" stroke="#6d6d6d" stroke-width="2.3" stroke-linecap="round" stroke-linejoin="round" fill="none"/></svg>
<div style="position:absolute;left:2734px;top:557px;width:234px;height:63.5px;box-sizing:border-box;border:2px solid #d0d7e1;border-radius:8px;background:#fff;"></div>
<div class="t" style="left:2760.40px;top:579.00px;font-size:23px;color:#1c1c1c;letter-spacing:0.000px;">Available</div>
<svg style="position:absolute;left:2910px;top:581px" width="30" height="20" viewBox="0 0 30 20"><path d="M4.9 4.6 L14 12.8 L23.1 4.6" stroke="#6d6d6d" stroke-width="2.3" stroke-linecap="round" stroke-linejoin="round" fill="none"/></svg>
<div style="position:absolute;left:1834.5px;top:550px;width:233px;height:78px;box-sizing:border-box;border:2px solid #d0d7e1;border-radius:8px;background:#fff;"></div>
<div class="t" style="left:1851.75px;top:576.00px;font-size:27.6px;color:#1c1c1c;letter-spacing:-0.150px;">01 May 2023</div>
<svg style="position:absolute;left:2013.5px;top:573px" width="30" height="32" viewBox="0 0 30 32"><g stroke="#a0a8b5" stroke-width="1.6" fill="none"><rect x="3.3" y="6.2" width="22" height="22" rx="3.5"/><path d="M3.3 11.8 H25.3 M9 3 V6.2 M21 3 V6.2"/><rect x="6.7" y="14.6" width="8" height="7.6" rx="2"/></g></svg>
<div style="position:absolute;left:2134.5px;top:550px;width:233px;height:78px;box-sizing:border-box;border:2px solid #d0d7e1;border-radius:8px;background:#fff;"></div>
<div class="t" style="left:2151.75px;top:576.00px;font-size:27.6px;color:#1c1c1c;letter-spacing:0.925px;">30 Apr 2028</div>
<svg style="position:absolute;left:2313.5px;top:573px" width="30" height="32" viewBox="0 0 30 32"><g stroke="#a0a8b5" stroke-width="1.6" fill="none"><rect x="3.3" y="6.2" width="22" height="22" rx="3.5"/><path d="M3.3 11.8 H25.3 M9 3 V6.2 M21 3 V6.2"/><rect x="6.7" y="14.6" width="8" height="7.6" rx="2"/></g></svg>
<div style="position:absolute;left:0px;top:638px;width:3000px;height:20px;background:#f2f4f7;"></div>
<div style="position:absolute;left:2px;top:638px;width:1715px;height:20px;box-sizing:border-box;background:#a1a8b3;border:2px solid #fff;border-radius:10px;"></div>
<div style="position:absolute;left:0px;top:636px;width:2px;height:22px;background:#e0e3e8;"></div>
</div>
<div style="position:absolute;left:40px;top:1236px;width:2780px;height:113px;box-sizing:border-box;border:2px solid #e0e3e8;border-top:none;border-radius:0 0 7px 7px;background:#fff;"></div>
<div class="t" style="left:2271.00px;top:1280.00px;font-size:25.4px;color:#1c1c1c;letter-spacing:0.050px;">1 to 6 of 6</div>
<div class="t" style="left:2547.60px;top:1280.00px;font-size:25.4px;color:#1c1c1c;letter-spacing:-1.190px;">Page 1 of 1</div>
<svg style="position:absolute;left:2450px;top:1280px" width="320" height="28" viewBox="0 0 320 28"><g stroke="#d2d2d2" stroke-width="1.3" fill="none"><path d="M6.9 6 V21.7 M17.7 6.5 L10 13.8 L17.7 21"/><path d="M67.6 6.8 L60.6 13.8 L67.6 20.8"/><path d="M246.7 6.8 L253.6 13.8 L246.7 20.8"/><path d="M296.5 6.5 L304 13.8 L296.5 21 M306.5 6 V21.7"/></g></svg>
<div style="position:absolute;left:2860px;top:0px;width:20px;height:1390px;background:#f5f6f8;"></div>
<div style="position:absolute;left:2862px;top:123px;width:16px;height:1265px;background:#a1a8b3;border-radius:8px;"></div>
<svg style="position:absolute;left:0px;top:1380px" width="10" height="10" viewBox="0 0 10 10"><path d="M0 0 A10 10 0 0 0 10 10 H0 Z" fill="#000"/></svg>
<svg style="position:absolute;left:2850px;top:1380px" width="10" height="10" viewBox="0 0 10 10"><path d="M10 0 A10 10 0 0 1 0 10 H10 Z" fill="#111"/></svg>
</div></body></html>
